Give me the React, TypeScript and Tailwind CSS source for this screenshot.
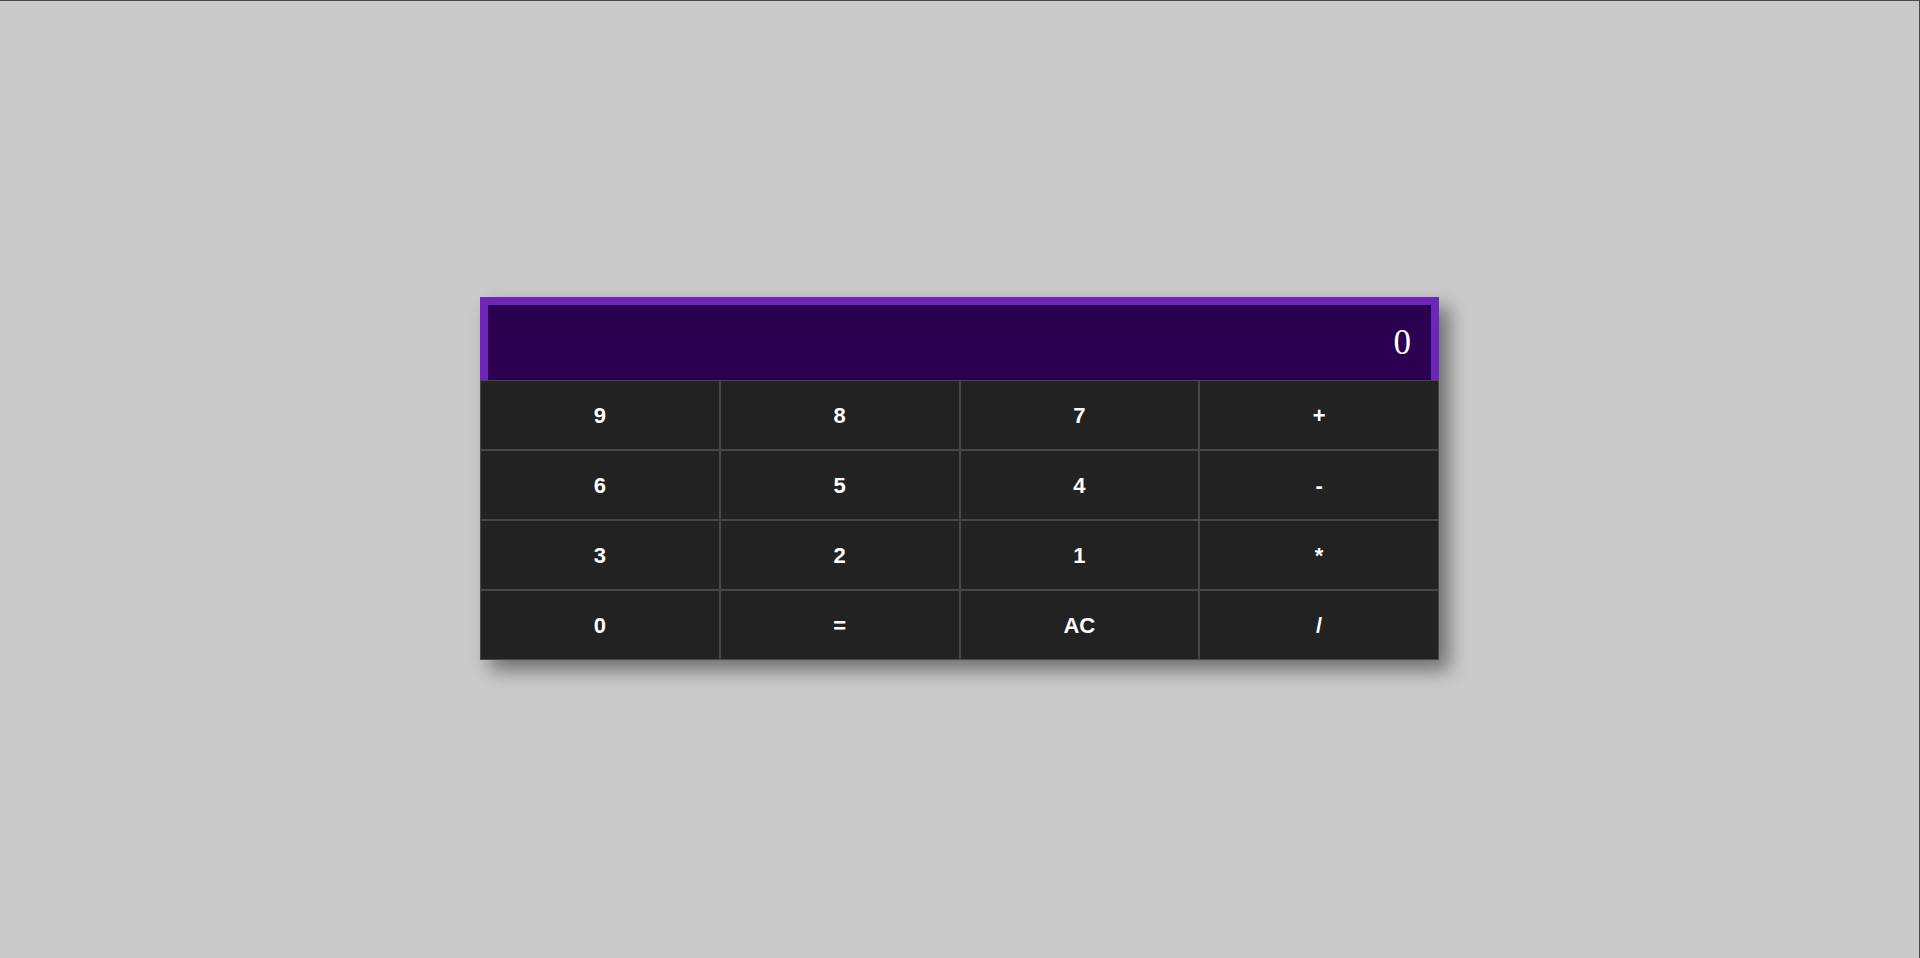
import React from "react";

const keys = ["9", "8", "7", "+", "6", "5", "4", "-", "3", "2", "1", "*", "0", "=", "AC", "/"];

export default function App() {
  return (
    <div className="w-full h-[958px] bg-[#cacaca] border-t border-r border-[#4a4a4a] pt-[296px] flex justify-center">
      <div className="w-[959px] h-[363px] shadow-[10px_10px_18px_rgba(0,0,0,0.45)]">
        <div
          className="h-[83px] border-8 border-b-0 border-[#6f25b7] bg-[#2b0050] flex items-center justify-end pr-5 text-white text-[35px] leading-none"
          style={{ fontFamily: '"Liberation Serif", "Times New Roman", serif' }}
        >
          0
        </div>
        <div className="grid grid-cols-4">
          {keys.map((k) => (
            <button
              key={k}
              className="h-[70px] border border-[#474747] bg-[#222222] text-white font-bold text-[22px] flex items-center justify-center"
              style={{ fontFamily: '"Liberation Sans", Arial, sans-serif' }}
            >
              {k}
            </button>
          ))}
        </div>
      </div>
    </div>
  );
}
